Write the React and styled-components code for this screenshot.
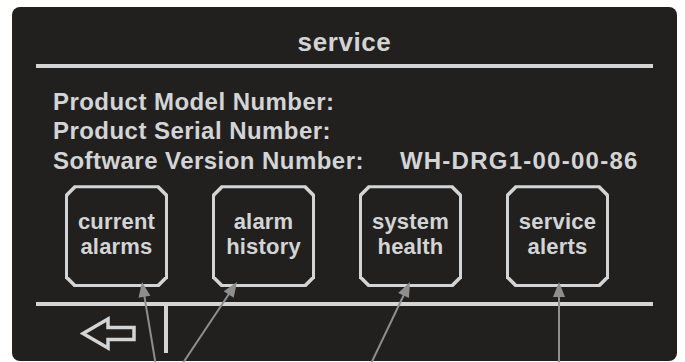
import React from 'react';
import styled, { createGlobalStyle } from 'styled-components';

const GlobalStyle = createGlobalStyle`
    html, body {
        margin: 0;
        padding: 0;
        background: #ffffff;
        overflow: hidden;
    }
    body {
        font-family: "Liberation Sans", Arial, sans-serif;
    }
`

const Page = styled.div`
    position: relative;
    width: 685px;
    height: 362px;
    padding: 7px 8px 1px 12px;
    box-sizing: border-box;
`

const Panel = styled.div`
    height: 100%;
    background: #22201f;
    border-radius: 8px;
    display: flex;
    flex-direction: column;
    padding: 20px 24px 8px;
    box-sizing: border-box;
    color: #d3d4d5;
`

const Title = styled.h1`
    margin: 0;
    font-size: 26px;
    line-height: 30px;
    font-weight: bold;
    text-align: center;
    letter-spacing: 0.6px;
`

const Rule = styled.div`
    height: 4px;
    background: #d3d4d5;
    margin-top: ${props => props.top}px;
`

const Info = styled.div`
    margin-top: 19px;
    padding-left: 17px;
    font-size: 24px;
    line-height: 29.5px;
    font-weight: bold;
    letter-spacing: 0.45px;
`

const InfoRow = styled.div`
    display: flex;
    gap: 36px;
    white-space: nowrap;
`

const Value = styled.span`
    letter-spacing: 1.25px;
`

const Buttons = styled.div`
    display: flex;
    gap: 44px;
    margin-top: 10px;
    padding-left: 29px;
`

const octagon = c => `polygon(${c}px 0, calc(100% - ${c}px) 0, 100% ${c}px, 100% calc(100% - ${c}px), calc(100% - ${c}px) 100%, ${c}px 100%, 0 calc(100% - ${c}px), 0 ${c}px)`

const ButtonFrame = styled.button`
    width: 103px;
    height: 102px;
    padding: 3px;
    border: 0;
    background: #d3d4d5;
    clip-path: ${octagon(9)};
    cursor: pointer;
    font: inherit;
`

const ButtonFace = styled.span`
    display: flex;
    align-items: center;
    justify-content: center;
    height: 100%;
    background: #22201f;
    clip-path: ${octagon(8)};
    color: #d3d4d5;
    font-family: "Liberation Sans", Arial, sans-serif;
    font-size: 22px;
    line-height: 25px;
    font-weight: bold;
    text-align: center;
    letter-spacing: 0.2px;
    padding-bottom: 4px;
    box-sizing: border-box;
`

const Footer = styled.div`
    display: flex;
    align-items: flex-start;
    flex: 1;
`

const BackButton = styled.button`
    margin: 10px 0 0 44px;
    padding: 0;
    border: 0;
    background: none;
    width: 57px;
    height: 35px;
    cursor: pointer;
`

const Divider = styled.div`
    width: 4px;
    height: 47px;
    margin-left: 27px;
    background: #d3d4d5;
`

const Overlay = styled.svg`
    position: absolute;
    left: 0;
    top: 0;
    pointer-events: none;
`

const arrows = [
    { from: [157, 372], to: [142, 282] },
    { from: [177, 372], to: [237, 282] },
    { from: [367, 372], to: [410, 282] },
    { from: [559, 372], to: [559, 282] },
]

const Arrow = ({ from, to }) => {
    const dx = to[0] - from[0];
    const dy = to[1] - from[1];
    const len = Math.hypot(dx, dy);
    const ux = dx / len, uy = dy / len;
    const head = 15, half = 6;
    const bx = to[0] - ux * head, by = to[1] - uy * head;
    const pts = [
        [to[0], to[1]],
        [bx - uy * half, by + ux * half],
        [bx + uy * half, by - ux * half],
    ].map(p => p.join(',')).join(' ');
    return (
        <g>
            <line x1={from[0]} y1={from[1]} x2={bx + ux * 2} y2={by + uy * 2} stroke="#8e8e8e" strokeWidth="2" />
            <polygon points={pts} fill="#8e8e8e" />
        </g>
    )
}

const buttons = [
    ['current', 'alarms'],
    ['alarm', 'history'],
    ['system', 'health'],
    ['service', 'alerts'],
]

export default function App() {
    return (
        <>
            <GlobalStyle />
            <Page>
                <Panel>
                    <Title>service</Title>
                    <Rule top={7} />
                    <Info>
                        <InfoRow>Product Model Number:</InfoRow>
                        <InfoRow>Product Serial Number:</InfoRow>
                        <InfoRow>
                            <span>Software Version Number:</span>
                            <Value>WH-DRG1-00-00-86</Value>
                        </InfoRow>
                    </Info>
                    <Buttons>
                        {buttons.map(([a, b]) => (
                            <ButtonFrame key={a + b}>
                                <ButtonFace>{a}<br />{b}</ButtonFace>
                            </ButtonFrame>
                        ))}
                    </Buttons>
                    <Rule top={15} />
                    <Footer>
                        <BackButton aria-label="back">
                            <svg width="57" height="35" viewBox="0 0 57 35">
                                <polygon points="3,17.5 28,3 28,11.5 54,11.5 54,23.5 28,23.5 28,32"
                                    fill="none" stroke="#d3d4d5" strokeWidth="3.5" strokeLinejoin="miter" />
                            </svg>
                        </BackButton>
                        <Divider />
                    </Footer>
                </Panel>
                <Overlay width="685" height="362" viewBox="0 0 685 362">
                    {arrows.map((a, i) => <Arrow key={i} {...a} />)}
                </Overlay>
            </Page>
        </>
    )
}
